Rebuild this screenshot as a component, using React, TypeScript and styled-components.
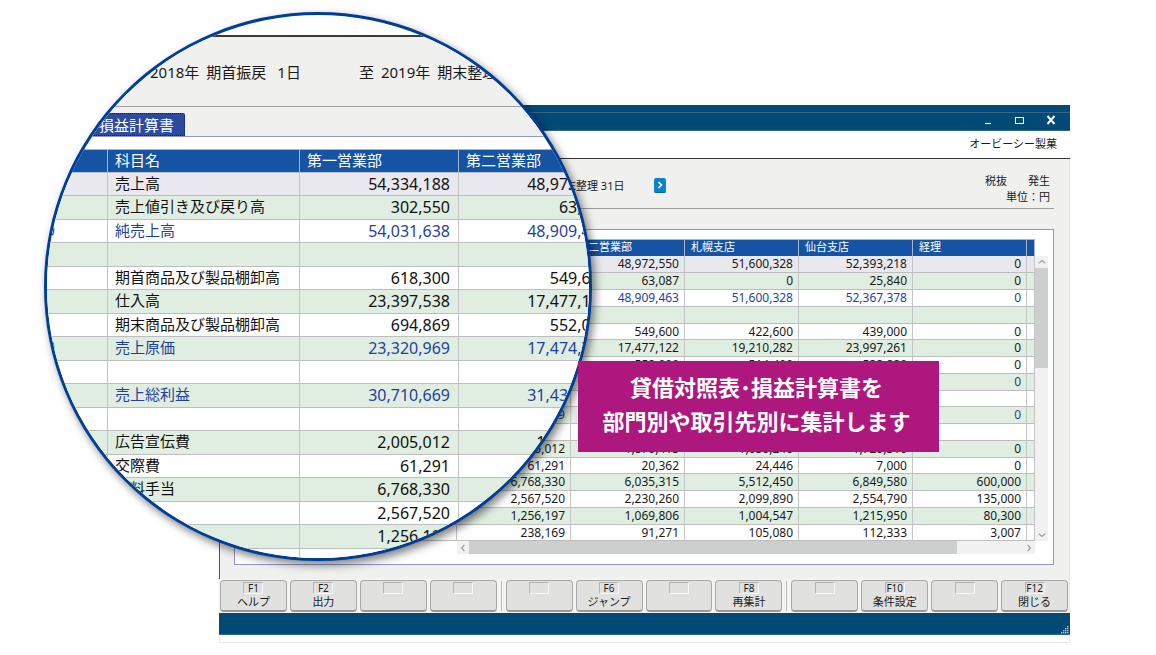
import React from "react";
import styled, { createGlobalStyle, css } from "styled-components";

const GlobalStyle = createGlobalStyle`
  * { box-sizing: border-box; }
  body {
    margin: 0;
    background: #ffffff;
    color: #1a1a1a;
    font-family: "Noto Sans", "Noto Sans CJK JP", sans-serif;
  }
`;

type Row = {
  label?: string;
  code?: string;
  total?: boolean;
  values: string[];
};

const rows: Row[] = [
  { label: "売上高", values: ["54,334,188", "48,972,550", "51,600,328", "52,393,218", "0"] },
  { label: "売上値引き及び戻り高", values: ["302,550", "63,087", "0", "25,840", "0"] },
  { label: "純売上高", code: "0", total: true, values: ["54,031,638", "48,909,463", "51,600,328", "52,367,378", "0"] },
  { values: ["", "", "", "", ""] },
  { label: "期首商品及び製品棚卸高", values: ["618,300", "549,600", "422,600", "439,000", "0"] },
  { label: "仕入高", values: ["23,397,538", "17,477,122", "19,210,282", "23,997,261", "0"] },
  { label: "期末商品及び製品棚卸高", values: ["694,869", "552,000", "514,400", "538,880", "0"] },
  { label: "売上原価", code: "0", total: true, values: ["23,320,969", "17,474,722", "", "", "0"] },
  { values: ["", "", "", "", ""] },
  { label: "売上総利益", total: true, values: ["30,710,669", "31,434,741", "", "", "0"] },
  { values: ["", "", "", "", ""] },
  { label: "広告宣伝費", values: ["2,005,012", "1,870,415", "1,650,240", "1,720,310", "0"] },
  { label: "交際費", values: ["61,291", "20,362", "24,446", "7,000", "0"] },
  { label: "給料手当", values: ["6,768,330", "6,035,315", "5,512,450", "6,849,580", "600,000"] },
  { values: ["2,567,520", "2,230,260", "2,099,890", "2,554,790", "135,000"] },
  { values: ["1,256,197", "1,069,806", "1,004,547", "1,215,950", "80,300"] },
  { values: ["238,169", "91,271", "105,080", "112,333", "3,007"] },
];

const departments = ["第一営業部", "第二営業部", "札幌支店", "仙台支店", "経理"];

const keyGroups: { k?: string; name?: string }[][] = [
  [{ k: "F1", name: "ヘルプ" }, { k: "F2", name: "出力" }, {}, {}],
  [{}, { k: "F6", name: "ジャンプ" }, {}, { k: "F8", name: "再集計" }],
  [{}, { k: "F10", name: "条件設定" }, {}, { k: "F12", name: "閉じる" }],
];

const Stage = styled.main`
  position: relative;
  min-height: 655px;
  padding: 105px 86px 12px 219px;
  overflow: hidden;
`;

const AppWindow = styled.section`
  display: flex;
  flex-direction: column;
`;

const TitleBar = styled.header`
  height: 26px;
  background: #004a75;
  border-bottom: 1px solid #2d6789;
  display: flex;
  flex-direction: column;
`;

const TitleEdge = styled.div`
  height: 8px;
  border-bottom: 1px solid #34668a;
`;

const Controls = styled.div`
  display: flex;
  justify-content: flex-end;
  gap: 19px;
  padding: 1px 13px 0 0;
`;

const ControlButton = styled.button`
  width: 12px;
  height: 12px;
  padding: 0;
  border: 0;
  background: none;
  color: #ffffff;
  & svg { display: block; }
`;

const CompanyBar = styled.div`
  height: 28px;
  padding-right: 13px;
  border-bottom: 1px solid #333333;
  text-align: right;
  font-size: 11px;
  line-height: 26px;
`;

const Body = styled.div`
  padding: 0 15px 14px 14px;
  background: #f0f0ef;
  border-left: 1px solid #555555;
  border-right: 1px solid #e4e4e4;
`;

const Conditions = styled.div`
  height: 50px;
  padding: 4px 0 0 331px;
  border-bottom: 1px solid #9d9d9d;
  display: flex;
  align-items: center;
  font-size: 11px;
  line-height: 16px;
  white-space: nowrap;
`;

const NextButton = styled.button`
  width: 12px;
  height: 15px;
  margin-left: 30px;
  padding: 0;
  border: 0;
  border-bottom: 1px solid #00649f;
  border-radius: 2px;
  background: #0a84cc;
  & svg { display: block; margin: auto; }
`;

const Units = styled.div`
  margin-left: auto;
  padding: 6px 4px 0 0;
  text-align: right;
`;

const Basis = styled.div`
  display: flex;
  gap: 21px;
  justify-content: flex-end;
`;

const Sheet = styled.div`
  margin-top: 20px;
  padding: 9px 5px 10px 10px;
  border: 1px solid #9494cc;
  background: #ffffff;
`;

const SheetTop = styled.div`
  display: flex;
`;

const DataTable = styled.table`
  border-collapse: separate;
  border-spacing: 0;
  table-layout: fixed;
  white-space: nowrap;
  & th, & td { padding: 0; font-weight: 400; vertical-align: top; }
`;

const cellEdges = css`
  border-right: 1px solid #c4c4c6;
  border-bottom: 1px solid #bdbdc0;
`;

const headEdges = css`
  background: #1553a5;
  color: #ffffff;
  text-align: left;
  border-top: 1px solid #a9b4cb;
  border-right: 1px solid #a9b4cb;
`;

const band = (i: number) => (i === 0 ? "#e9e8ef" : i % 2 ? "#dfeee1" : "#ffffff");

const BranchTable = styled(DataTable)`
  flex: 1;
  width: 100%;
  min-width: 0;
`;

const BranchHead = styled.th`
  ${headEdges}
  height: 17px;
  font-size: 11px;
  line-height: 14px;
  && { padding-left: 6px; }
`;

const BranchRow = styled.tr<{ $index: number; $total?: boolean }>`
  height: ${(p) => (p.$index > 0 && p.$index % 4 === 0 ? 16 : 17)}px;
  background: ${(p) => band(p.$index)};
  color: ${(p) => (p.$total ? "#1f3f9c" : "#1a1a1a")};
`;

const BranchCell = styled.td`
  ${cellEdges}
  font-size: 12px;
  line-height: 15px;
  text-align: right;
  && { padding-right: 5px; }
`;

const VerticalScroll = styled.div`
  width: 13px;
  margin-top: 17px;
  background: #f1f1f1;
  display: flex;
  flex-direction: column;
  align-items: center;
`;

const VerticalThumb = styled.div`
  width: 100%;
  height: 100px;
  margin-bottom: auto;
  background: #cdcfcf;
`;

const HorizontalScroll = styled.div`
  height: 13px;
  margin: 0 13px 0 212px;
  background: #f1f1f1;
  display: flex;
  align-items: center;
`;

const HorizontalThumb = styled.div`
  width: 488px;
  height: 100%;
  margin-right: auto;
  background: #cdcfcf;
`;

const KeyBar = styled.div`
  display: flex;
  gap: 3px;
  height: 34px;
  padding: 1px;
  background: #f4f4f3;
  border-right: 1px solid #e4e4e4;
`;

const KeyDivider = styled.span`
  width: 1px;
  margin: 1px;
  background: #bcbcbc;
`;

const KeyButton = styled.button`
  flex: 1;
  min-width: 0;
  padding: 1px 0 0;
  display: flex;
  flex-direction: column;
  align-items: center;
  border: 1px solid #a8a8a8;
  border-bottom: 2px solid #989898;
  border-radius: 4px;
  background: #e1e1e0;
  color: #1a1a1a;
  font-family: inherit;
`;

const KeyCap = styled.span`
  width: 20px;
  height: 12px;
  border: 1px solid #b5b5b5;
  border-right-color: #f8f8f8;
  border-bottom-color: #f8f8f8;
  font-size: 10px;
  line-height: 10px;
  display: flex;
  justify-content: center;
`;

const KeyName = styled.span`
  font-size: 11px;
  line-height: 16px;
`;

const StatusBar = styled.footer`
  height: 22px;
  padding: 0 1px 0 0;
  background: #004a75;
  border-bottom: 1px solid #2d6789;
  display: flex;
  justify-content: flex-end;
  align-items: flex-end;
`;

const WindowEdge = styled.div`
  height: 8px;
  border: 1px solid #e6e6e6;
  border-top: 0;
`;

const Lens = styled.section`
  position: absolute;
  left: 44px;
  top: 12px;
  width: 548px;
  height: 549px;
  padding-top: 20px;
  overflow: hidden;
  border: 3px solid #003f98;
  border-radius: 50%;
  background: #ffffff;
  box-shadow: 3px 4px 8px rgba(0, 0, 0, 0.5);
`;

const LensPeriod = styled.div`
  height: 72px;
  padding-left: 103px;
  border-top: 2px solid #3a3a3a;
  border-bottom: 1px solid #9d9d9d;
  background: #f0f0ef;
  display: flex;
  align-items: center;
  gap: 58px;
  font-size: 15px;
  white-space: nowrap;
`;

const PeriodDate = styled.div`
  display: flex;
  gap: 7px;
`;

const PeriodDay = styled.span`
  margin-left: 4px;
`;

const LensTabs = styled.div`
  height: 30px;
  padding: 6px 0 0 43px;
  border-bottom: 1px solid #9494cc;
  background: #f0f0ef;
`;

const LensTab = styled.button`
  display: block;
  height: 23px;
  padding: 0 10px 0 8px;
  border: 1px dotted #10205c;
  border-radius: 0 2px 0 0;
  background: #2d4a9f;
  color: #ffffff;
  font-family: inherit;
  font-size: 15px;
  line-height: 20px;
`;

const LensTable = styled(DataTable)`
  width: 611px;
  margin: 12px 0 0 -40px;
`;

const LensHead = styled.th`
  ${headEdges}
  height: 24px;
  border-bottom: 1px solid #b9bdc9;
  font-size: 15px;
  line-height: 20px;
  && { padding-left: 7px; }
`;

const LensRow = styled.tr<{ $index: number; $total?: boolean }>`
  height: ${(p) => (p.$index % 2 ? 24 : 23)}px;
  background: ${(p) => band(p.$index)};
  color: ${(p) => (p.$total ? "#1f3f9c" : "#111111")};
`;

const LensCode = styled.td`
  ${cellEdges}
  font-size: 16px;
  line-height: 20px;
  text-align: right;
  && { padding-right: 52px; }
`;

const LensLabel = styled.td`
  ${cellEdges}
  font-size: 15px;
  line-height: 20px;
  && { padding-left: 7px; }
`;

const LensAmount = styled.td`
  ${cellEdges}
  font-size: 16px;
  line-height: 22px;
  text-align: right;
  && { padding-right: 8px; }
`;

const Banner = styled.p`
  position: absolute;
  left: 578px;
  top: 361px;
  width: 361px;
  margin: 0;
  padding: 8px 4px 15px 0;
  background: #ae187e;
  color: #ffffff;
  font-family: "Noto Sans CJK JP", sans-serif;
  font-size: 22px;
  font-weight: 700;
  line-height: 34px;
  text-align: center;
  white-space: nowrap;
`;

const arrows = {
  up: "M3 8 L6.500 5 L10 8",
  down: "M3 5 L6.500 8 L10 5",
  left: "M8 3 L5 6.500 L8 10",
  right: "M5 3 L8 6.500 L5 10",
};

function Arrow({ dir }: { dir: keyof typeof arrows }) {
  return (
    <svg width="12" height="12" viewBox="0 0 13 13" fill="none" stroke="#9a9a9a" strokeWidth="1.3">
      <path d={arrows[dir]} />
    </svg>
  );
}

function Grip() {
  const dots = [[7, 1], [5, 3], [7, 3], [3, 5], [5, 5], [7, 5], [1, 7], [3, 7], [5, 7], [7, 7]];
  return (
    <svg width="9" height="9" viewBox="0 0 9 9" fill="#a9c1d1">
      {dots.map(([x, y]) => (
        <rect key={`${x}-${y}`} x={x} y={y} width="1.400" height="1.400" />
      ))}
    </svg>
  );
}

function Magnifier() {
  return (
    <Lens>
      <LensPeriod>
        <PeriodDate>
          <span>2018年</span>
          <span>期首振戻</span>
          <PeriodDay>1日</PeriodDay>
        </PeriodDate>
        <PeriodDate>
          <span>至</span>
          <span>2019年</span>
          <span>期末整理</span>
        </PeriodDate>
      </LensPeriod>
      <LensTabs>
        <LensTab>損益計算書</LensTab>
      </LensTabs>
      <LensTable>
        <colgroup>
          <col width="101" />
          <col width="192" />
          <col width="159" />
          <col width="159" />
        </colgroup>
        <thead>
          <tr>
            <LensHead />
            <LensHead>科目名</LensHead>
            <LensHead>{departments[0]}</LensHead>
            <LensHead>{departments[1]}</LensHead>
          </tr>
        </thead>
        <tbody>
          {rows.map((r, i) => (
            <LensRow key={i} $index={i} $total={r.total}>
              <LensCode>{r.code}</LensCode>
              <LensLabel>{r.label}</LensLabel>
              <LensAmount>{i < 16 ? r.values[0] : ""}</LensAmount>
              <LensAmount>{i < 12 ? r.values[1] : ""}</LensAmount>
            </LensRow>
          ))}
        </tbody>
      </LensTable>
    </Lens>
  );
}

export default function App() {
  return (
    <>
      <GlobalStyle />
      <Stage>
        <AppWindow>
          <TitleBar>
            <TitleEdge />
            <Controls>
              <ControlButton aria-label="最小化">
                <svg width="12" height="12" viewBox="0 0 12 12"><path d="M2 9.500h6" stroke="#fff" strokeWidth="1.200" /></svg>
              </ControlButton>
              <ControlButton aria-label="最大化">
                <svg width="12" height="12" viewBox="0 0 12 12"><rect x="1.500" y="3.500" width="8" height="6" fill="none" stroke="#fff" /></svg>
              </ControlButton>
              <ControlButton aria-label="ウィンドウを閉じる">
                <svg width="12" height="12" viewBox="0 0 12 12"><path d="M2.500 2l7 8M9.500 2l-7 8" stroke="#fff" strokeWidth="1.900" /></svg>
              </ControlButton>
            </Controls>
          </TitleBar>
          <CompanyBar>オービーシー製菓</CompanyBar>
          <Body>
            <Conditions>
              <span>末整理 31日</span>
              <NextButton aria-label="次へ">
                <svg width="8" height="8" viewBox="0 0 8 8" fill="none" stroke="#fff" strokeWidth="1.600"><path d="M2.500 1 L5.500 4 L2.500 7" /></svg>
              </NextButton>
              <Units>
                <Basis>
                  <span>税抜</span>
                  <span>発生</span>
                </Basis>
                <div>単位：円</div>
              </Units>
            </Conditions>
            <Sheet>
              <SheetTop>
                <BranchTable>
                  <colgroup>
                    <col width="212" />
                    {departments.map((d) => <col key={d} />)}
                    <col width="8" />
                  </colgroup>
                  <thead>
                    <tr>
                      <BranchHead />
                      {departments.map((d) => <BranchHead key={d}>{d}</BranchHead>)}
                      <BranchHead />
                    </tr>
                  </thead>
                  <tbody>
                    {rows.map((r, i) => (
                      <BranchRow key={i} $index={i} $total={r.total}>
                        <BranchCell />
                        {r.values.map((v, c) => (
                          <BranchCell key={c}>{r.total && i > 6 && c === 1 ? "" : v}</BranchCell>
                        ))}
                        <BranchCell />
                      </BranchRow>
                    ))}
                  </tbody>
                </BranchTable>
                <VerticalScroll>
                  <Arrow dir="up" />
                  <VerticalThumb />
                  <Arrow dir="down" />
                </VerticalScroll>
              </SheetTop>
              <HorizontalScroll>
                <Arrow dir="left" />
                <HorizontalThumb />
                <Arrow dir="right" />
              </HorizontalScroll>
            </Sheet>
          </Body>
          <KeyBar>
            {keyGroups.map((group, g) => (
              <React.Fragment key={g}>
                {g > 0 && <KeyDivider />}
                {group.map((item, i) => (
                  <KeyButton key={i} disabled={!item.k}>
                    <KeyCap>{item.k}</KeyCap>
                    {item.name && <KeyName>{item.name}</KeyName>}
                  </KeyButton>
                ))}
              </React.Fragment>
            ))}
          </KeyBar>
          <StatusBar>
            <Grip />
          </StatusBar>
          <WindowEdge />
        </AppWindow>
        <Magnifier />
        <Banner>
          貸借対照表･損益計算書を
          <br />
          部門別や取引先別に集計します
        </Banner>
      </Stage>
    </>
  );
}
